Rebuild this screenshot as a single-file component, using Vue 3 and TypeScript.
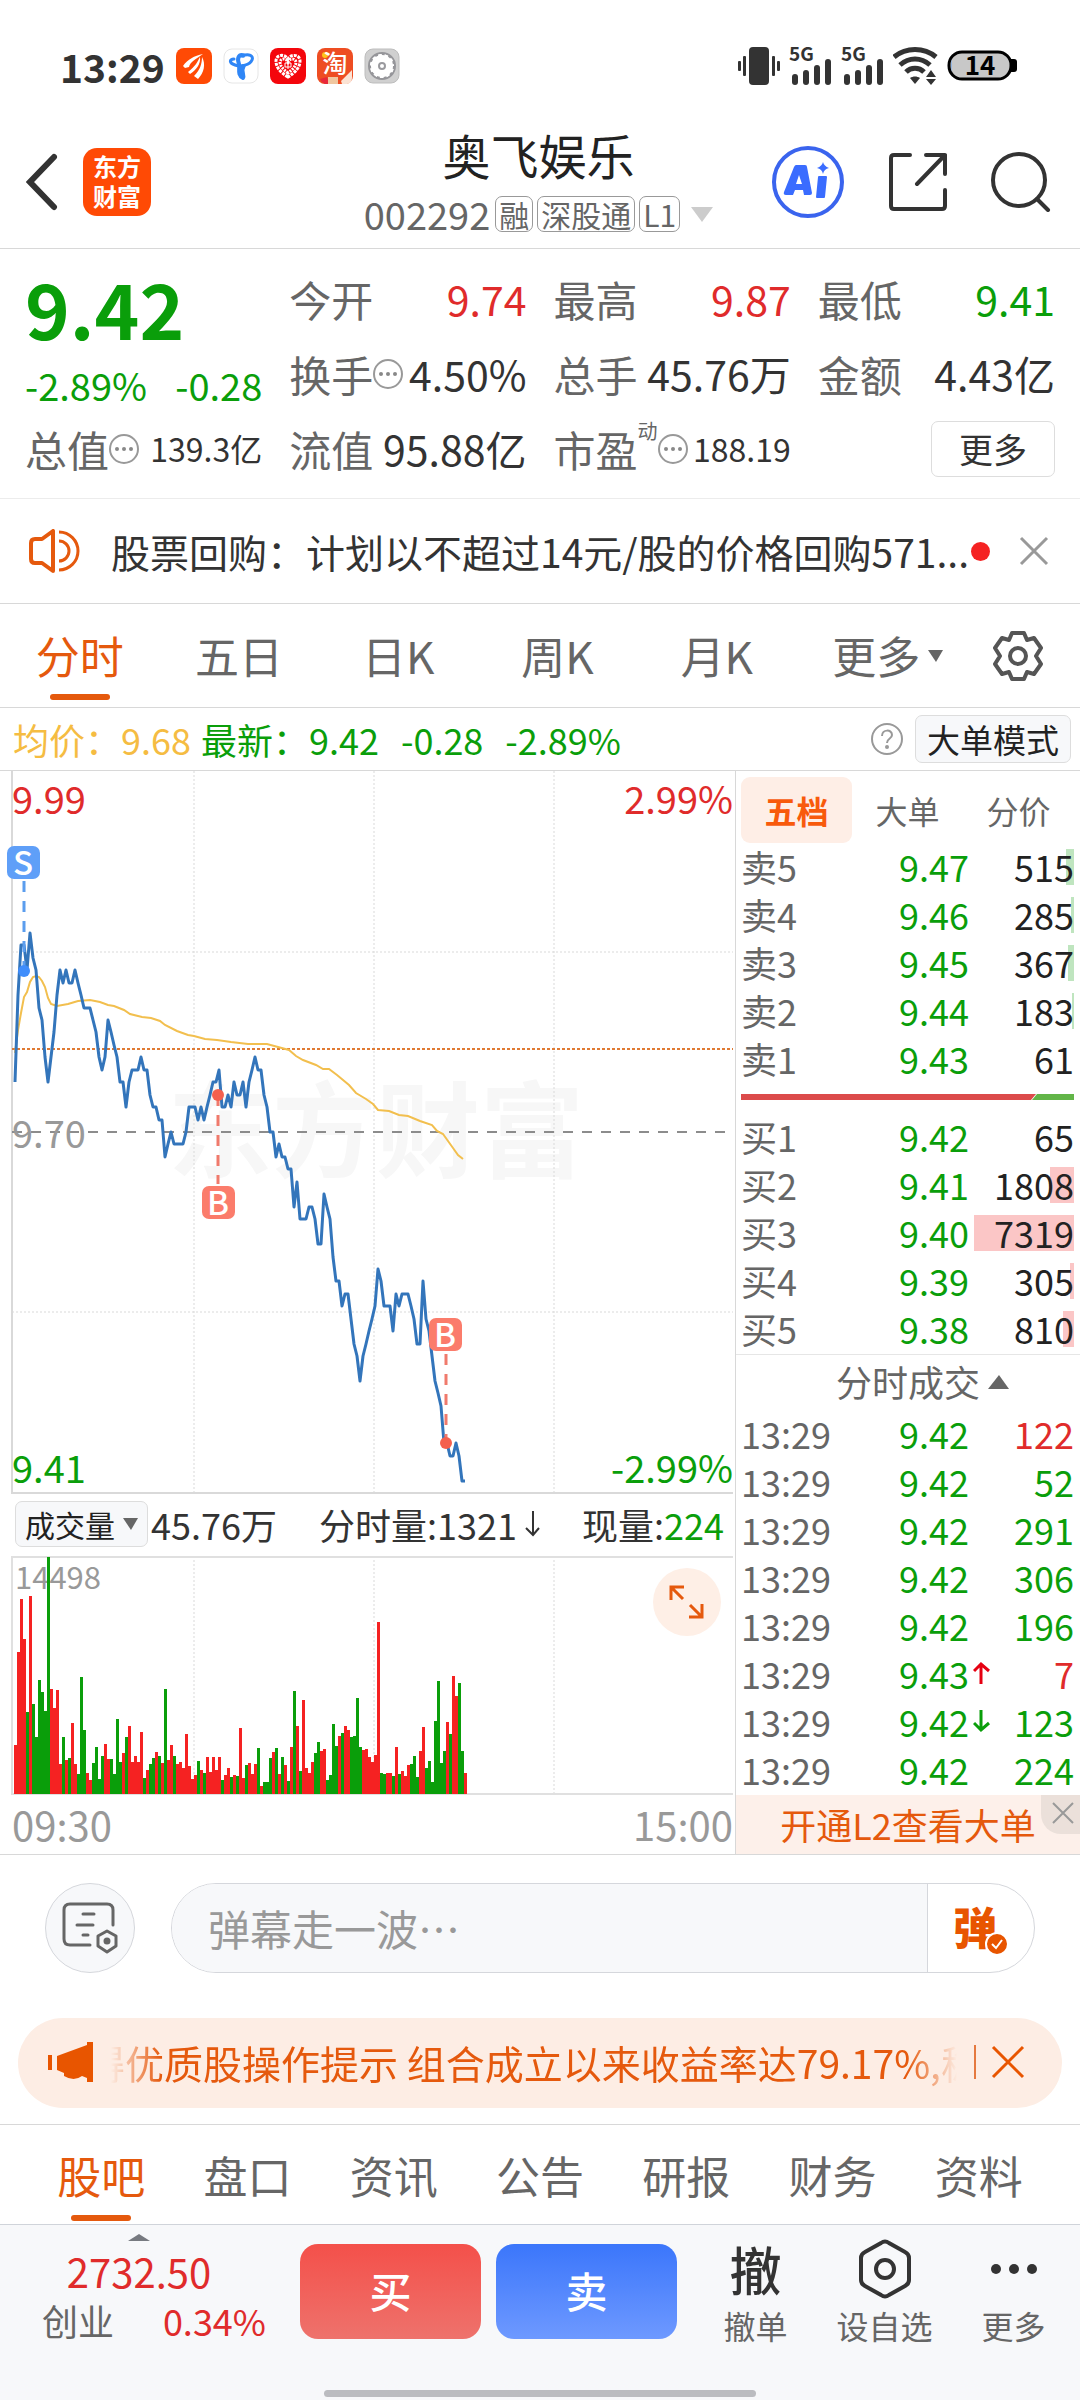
<script setup lang="ts">
import { ref } from 'vue'

type Tone = 'up' | 'down' | 'plain'

interface Level {
  label: string
  price: string
  volume: string
  bar: number
}

interface Trade {
  time: string
  price: string
  arrow: '' | 'up' | 'down'
  volume: string
  tone: Tone
}

const periods = ['分时', '五日', '日K', '周K', '月K', '更多']
const activePeriod = ref('分时')

const depthTabs = ['五档', '大单', '分价']
const activeDepth = ref('五档')

const sections = ['股吧', '盘口', '资讯', '公告', '研报', '财务', '资料']
const activeSection = ref('股吧')

const message = ref('')
const indicator = ref('成交量')

const asks: Level[] = [
  { label: '卖5', price: '9.47', volume: '515', bar: 7 },
  { label: '卖4', price: '9.46', volume: '285', bar: 3 },
  { label: '卖3', price: '9.45', volume: '367', bar: 5 },
  { label: '卖2', price: '9.44', volume: '183', bar: 2 },
  { label: '卖1', price: '9.43', volume: '61', bar: 0 },
]

const bids: Level[] = [
  { label: '买1', price: '9.42', volume: '65', bar: 0 },
  { label: '买2', price: '9.41', volume: '1808', bar: 22 },
  { label: '买3', price: '9.40', volume: '7319', bar: 100 },
  { label: '买4', price: '9.39', volume: '305', bar: 4 },
  { label: '买5', price: '9.38', volume: '810', bar: 10 },
]

const trades: Trade[] = [
  { time: '13:29', price: '9.42', arrow: '', volume: '122', tone: 'up' },
  { time: '13:29', price: '9.42', arrow: '', volume: '52', tone: 'down' },
  { time: '13:29', price: '9.42', arrow: '', volume: '291', tone: 'down' },
  { time: '13:29', price: '9.42', arrow: '', volume: '306', tone: 'down' },
  { time: '13:29', price: '9.42', arrow: '', volume: '196', tone: 'down' },
  { time: '13:29', price: '9.43', arrow: 'up', volume: '7', tone: 'up' },
  { time: '13:29', price: '9.42', arrow: 'down', volume: '123', tone: 'down' },
  { time: '13:29', price: '9.42', arrow: '', volume: '224', tone: 'down' },
]

// Minute closes, in cents above or below the previous close of 9.70.
const closes: number[] = [
  4, 11, 15, 15, 13, 16, 14, 13, 10, 9, 6, 4, 6, 8, 11, 13, 12, 13, 12, 12, 13, 12, 11, 10, 10, 10, 9, 8, 6, 5,
  6, 9, 8, 7, 6, 4, 4, 2, 4, 5, 5, 5, 6, 5, 5, 3, 2, 2, 1, 1, -2, -1, 0, -1, -1, -1, -1, 0, 2, 2,
  2, 1, 2, 1, 2, 3, 4, 4, 5, 2, 2, 3, 2, 4, 3, 3, 4, 2, 4, 5, 6, 5, 5, 3, 2, 0, 0, -2, -1, -2,
  -2, -3, -3, -6, -4, -7, -7, -7, -6, -6, -7, -9, -9, -5, -6, -7, -10, -12, -12, -14, -13, -13, -15, -17, -18, -20, -18, -17, -16, -15,
  -14, -11, -12, -14, -14, -14, -16, -13, -14, -13, -13, -13, -14, -15, -17, -17, -12, -15, -16, -18, -20, -21, -22, -25, -25, -26, -26, -25, -26, -28,
  -28,
]

const plotLeft = 12
const minute = 3
const baseY = 361
const cent = 12.45

const priceLine = closes
  .map((c, i) => `${plotLeft + minute * (i + 1)},${Math.round(baseY - c * cent)}`)
  .join(' ')

const averageLine = [
  [15, 282], [18, 259], [21, 242], [24, 226], [27, 221], [30, 211], [33, 206], [36, 205], [39, 206], [42, 210],
  [45, 216], [48, 227], [51, 233], [57, 235], [68, 233], [78, 230], [90, 229], [100, 231], [108, 234], [114, 235],
  [124, 239], [130, 243], [142, 246], [151, 247], [160, 250], [165, 254], [177, 260], [188, 264], [194, 265],
  [205, 268], [217, 269], [231, 271], [248, 273], [267, 273], [278, 276], [289, 279], [296, 285], [303, 289],
  [316, 294], [323, 298], [329, 298], [337, 304], [349, 314], [356, 322], [366, 328], [373, 333], [378, 339],
  [389, 340], [399, 344], [408, 345], [420, 350], [432, 354], [437, 360], [443, 363], [448, 370], [453, 377],
  [458, 384], [463, 388],
]
  .map(([x, y]) => `${x},${y}`)
  .join(' ')

// One entry per minute: colour letter (r rising, g falling) and bar height.
const volumes = (
  'r49 r142 r195 r155 g82 r198 g90 g57 g114 g102 g83 g237 r105 r86 r104 r30 g57 r34 g36 r71 r30 g20 g117 g64 r21 ' +
  'r14 g31 g47 g15 g38 r50 r35 g35 g20 g75 g32 r41 g57 r68 r32 r38 r32 r62 g16 r24 g30 g36 r42 g38 r31 g105 r34 ' +
  'r49 g38 r30 r32 r26 r60 r28 r15 r19 g33 r24 g21 r37 r22 r37 r24 r37 g14 r19 r26 g17 r19 g18 r66 r16 g29 r31 ' +
  'r20 r30 g46 r8 g12 g12 g36 r42 g46 r20 g37 r29 g13 r47 g103 r68 g23 r94 r26 r21 r32 g41 g52 r43 r45 g14 g19 ' +
  'g70 g48 r58 g61 r68 r64 g57 g58 g96 g47 r44 r45 r37 r32 r39 r172 g21 g20 r21 r21 g18 r47 g20 r23 r18 r29 g30 ' +
  'g38 g17 r43 r67 g26 g33 g12 g73 g113 g31 g43 r72 g60 r118 r98 g111 g43 r21'
)
  .split(' ')
  .map((item, i) => ({
    x: plotLeft + minute * (i + 1) - 1,
    height: Number(item.slice(1)),
    fill: item[0] === 'r' ? '#f52222' : '#0a9e0a',
  }))
</script>

<template>
  <div class="page">
    <div class="status">
      <div class="status-left">
        <span class="clock">13:29</span>
        <svg class="app" viewBox="0 0 36 36">
          <rect width="36" height="36" rx="8" fill="#ff4a05" />
          <path d="M7 18 C12 11 18 8 27 6 C20 11 14 14 13 19 L9 20 Z" fill="#fff" />
          <path d="M12 24 C19 19 22 13 24 9 C25 16 20 22 14 26 Z" fill="#fff" />
          <path d="M18 28 C24 22 26 16 26 9 C30 16 28 25 22 31 Z" fill="#fff" />
        </svg>
        <svg class="app" viewBox="0 0 36 36">
          <rect x="1" y="1" width="34" height="34" rx="8" fill="#fff" stroke="#e6e6e6" />
          <path d="M19 8 C26 5 31 8 29 12 C27 17 18 19 12 17 C6 15 6 11 11 11" fill="none" stroke="#2f86f6" stroke-width="3" stroke-linecap="round" />
          <path d="M22 8 C15 5 14 11 16 16 C17 21 14 27 20 30 C22 27 17 24 21 17" fill="none" stroke="#2f86f6" stroke-width="4" stroke-linejoin="round" />
        </svg>
        <svg class="app" viewBox="0 0 36 36">
          <rect width="36" height="36" rx="8" fill="#f4060c" />
          <path d="M18 29 C10 24 6 19 6 13 C6 7 14 5 18 11 C22 5 30 7 30 13 C30 19 26 24 18 29 Z" fill="none" stroke="#fff" stroke-width="3" stroke-dasharray="3 1" />
          <path d="M18 25 C13 21 10 18 10 14 C11 10 16 10 18 14 C20 10 25 10 26 14 C26 18 23 21 18 25 Z" fill="none" stroke="#fff" stroke-width="3" stroke-dasharray="2 1" />
          <path d="M15 15 h6 v4 h-6 z M18 13 v8" fill="none" stroke="#fff" stroke-width="1" />
        </svg>
        <svg class="app" viewBox="0 0 36 36">
          <rect width="36" height="36" rx="8" fill="#ee4d22" />
          <circle cx="8" cy="7" r="3" fill="#ffc21a" />
          <path d="M3 31 L10 29 L12 36 H8 A8 8 0 0 1 3 31 Z" fill="#e8283a" />
          <path d="M11 29 h10 v7 h-10 z" fill="#f0c7a0" />
          <path d="M24 33 L35 22 V30 A6 6 0 0 1 30 36 H25 Z" fill="#fbe3d4" />
          <text x="18" y="25" text-anchor="middle" font-size="25" font-weight="500" fill="#fff">淘</text>
        </svg>
        <svg class="app" viewBox="0 0 36 36">
          <rect x="1" y="1" width="34" height="34" rx="8" fill="#d0d0d0" stroke="#bdbdbd" />
          <circle cx="18" cy="18" r="13" fill="#fff" stroke="#96969a" stroke-width="2" />
          <circle cx="18" cy="18" r="12" fill="#fff" stroke="#96969a" stroke-width="2" stroke-dasharray="3 4" />
          <circle cx="18" cy="18" r="3" fill="none" stroke="#9a9a9e" stroke-width="2" />
        </svg>
      </div>
      <div class="status-right">
        <svg width="42" height="38" viewBox="0 0 42 38" fill="#333">
          <rect x="11" y="0" width="20" height="38" rx="4" />
          <rect x="5" y="9" width="3" height="20" rx="1" />
          <rect x="0" y="14" width="3" height="10" rx="1" />
          <rect x="34" y="9" width="3" height="20" rx="1" />
          <rect x="39" y="14" width="3" height="10" rx="1" />
        </svg>
        <svg v-for="n in 2" :key="n" class="signal" width="43" height="38" viewBox="0 0 43 38" fill="#333">
          <text x="0" y="14" font-size="19" font-weight="700">5G</text>
          <rect x="3" y="27" width="6" height="11" rx="3" />
          <rect x="14" y="23" width="6" height="15" rx="3" />
          <rect x="25" y="18" width="6" height="20" rx="3" />
          <rect x="36" y="12" width="6" height="26" rx="3" />
        </svg>
        <svg width="45" height="38" viewBox="0 0 45 38" fill="none" stroke="#333" stroke-width="5">
          <path d="M1 10 C13 0 31 0 43 10" />
          <path d="M7 18 C16 10 28 10 37 18" />
          <path d="M13 25 C18 20 26 20 31 25" />
          <path d="M17 31 C20 29 24 29 27 31 L22 37 Z" fill="#333" stroke="none" />
          <path d="M38 23 L43 30 H33 Z M38 38 L43 32 H33 Z" fill="#333" stroke="none" />
        </svg>
        <svg class="signal" width="71" height="32" viewBox="0 0 71 32">
          <path d="M64 9 h3 a3 3 0 0 1 3 3 v7 a3 3 0 0 1 -3 3 h-3 z" fill="#000" />
          <rect x="2" y="2" width="62" height="27" rx="13" fill="#c8c8c8" stroke="#000" stroke-width="3" />
          <path d="M5 9 Q3 15 5 22 Z" fill="#8fb6e8" />
          <text x="33" y="25" text-anchor="middle" font-size="26" font-weight="700" fill="#000">14</text>
        </svg>
      </div>
    </div>

    <header class="header">
      <div class="header-left">
        <button class="icon-button" aria-label="返回">
          <svg width="32" height="58" viewBox="0 0 32 58"><path d="M28 4 L4 29 L28 54" fill="none" stroke="#333" stroke-width="6" stroke-linecap="round" /></svg>
        </button>
        <span class="brand"><span>东方</span><span>财富</span></span>
      </div>
      <div class="title">
        <h1>奥飞娱乐</h1>
        <p>
          <span class="code">002292</span>
          <span class="tag">融</span><span class="tag">深股通</span><span class="tag">L1</span>
          <svg class="caret" width="22" height="15" viewBox="0 0 22 15"><path d="M0 0 H22 L11 15 Z" fill="#ccc" /></svg>
        </p>
      </div>
      <div class="header-right">
        <button class="icon-button" aria-label="智能助手">
          <svg width="74" height="74" viewBox="0 0 74 74">
            <circle cx="37" cy="37" r="34" fill="none" stroke="#3a64ee" stroke-width="4" />
            <path d="M25 20 H34 Q36 20 36 22 L41 48 Q41 50 39 50 H33 L32 45 H24 L22 50 H15 Q12 50 13 47 L23 22 Q24 20 25 20 Z M28 30 L25 39 H31 Z" fill="#3a6cff" fill-rule="evenodd" />
            <path d="M48 32 H55 L53 52 H46 Z" fill="#3a6cff" stroke="#3a6cff" stroke-width="2" stroke-linejoin="round" />
            <path d="M52 17 Q53 21 58 23 Q53 24 52 29 Q51 24 46 23 Q51 21 52 17 Z" fill="#3a6cff" />
          </svg>
        </button>
        <button class="icon-button" aria-label="分享">
          <svg width="58" height="60" viewBox="0 0 58 60" fill="none" stroke="#333" stroke-width="4" stroke-linecap="round" stroke-linejoin="round">
            <path d="M21 3 H5 Q2 3 2 6 V54 Q2 57 5 57 H53 Q56 57 56 54 V38" />
            <path d="M37 3 H56 V22 M56 3 L28 32" />
          </svg>
        </button>
        <button class="icon-button" aria-label="搜索">
          <svg width="60" height="60" viewBox="0 0 60 60" fill="none" stroke="#333" stroke-width="4" stroke-linecap="round">
            <circle cx="28" cy="28" r="26" />
            <path d="M46 47 L57 58" />
          </svg>
        </button>
      </div>
    </header>

    <section class="stats">
      <div class="col">
        <strong class="last">9.42</strong>
        <div class="pair change"><span>-2.89%</span><span>-0.28</span></div>
        <div class="pair">
          <span class="name">总值<svg class="dots"><use href="#more-dots" /></svg></span><span class="small">139.3亿</span>
        </div>
      </div>
      <div class="col">
        <div class="pair"><span class="name">今开</span><span class="up">9.74</span></div>
        <div class="pair"><span class="name">换手<svg class="dots"><use href="#more-dots" /></svg></span><span>4.50%</span></div>
        <div class="pair"><span class="name">流值</span><span>95.88亿</span></div>
      </div>
      <div class="col">
        <div class="pair"><span class="name">最高</span><span class="up">9.87</span></div>
        <div class="pair"><span class="name">总手</span><span>45.76万</span></div>
        <div class="pair">
          <span class="name">市盈<sup>动</sup><svg class="dots"><use href="#more-dots" /></svg></span><span class="small">188.19</span>
        </div>
      </div>
      <div class="col">
        <div class="pair"><span class="name">最低</span><span class="down">9.41</span></div>
        <div class="pair"><span class="name">金额</span><span>4.43亿</span></div>
        <div class="pair end"><button class="outline">更多</button></div>
      </div>
      <svg class="defs">
        <symbol id="more-dots" viewBox="0 0 30 30">
          <circle cx="15" cy="15" r="14" fill="none" stroke="#999" stroke-width="2" />
          <circle cx="8" cy="15" r="2" fill="#888" />
          <circle cx="15" cy="15" r="2" fill="#888" />
          <circle cx="22" cy="15" r="2" fill="#888" />
        </symbol>
      </svg>
    </section>

    <section class="notice">
      <svg width="52" height="44" viewBox="0 0 52 44" fill="none" stroke="#e5590d" stroke-width="4" stroke-linejoin="round">
        <path d="M24 2 V42 L13 34 H6 Q2 34 2 30 V14 Q2 10 6 10 H13 Z" />
        <path d="M30 12 A10 10 0 0 1 30 32" stroke-width="3" />
        <path d="M30 3 A19 19 0 0 1 30 41" stroke-width="3" />
      </svg>
      <a href="#notice" class="notice-text">股票回购：计划以不超过14元/股的价格回购571...</a>
      <span class="red-dot"></span>
      <button class="icon-button" aria-label="关闭公告">
        <svg width="30" height="30" viewBox="0 0 30 30"><path d="M2 2 L28 28 M28 2 L2 28" stroke="#999" stroke-width="3" /></svg>
      </button>
    </section>

    <nav class="periods">
      <button v-for="p in periods" :key="p" :class="{ active: p === activePeriod }" @click="activePeriod = p">
        {{ p }}<svg v-if="p === '更多'" width="15" height="12" viewBox="0 0 15 12"><path d="M0 0 H15 L8 12 Z" fill="#666" /></svg>
      </button>
      <button aria-label="设置">
        <svg width="52" height="52" viewBox="0 0 52 52" fill="none" stroke="#555" stroke-width="4" stroke-linejoin="round">
          <path d="M20 3 H32 L35 10 L42 8 L49 18 L44 26 L49 34 L42 44 L35 42 L32 49 H20 L17 42 L10 44 L3 34 L8 26 L3 18 L10 8 L17 10 Z" />
          <circle cx="26" cy="26" r="8" />
        </svg>
      </button>
    </nav>

    <div class="quote">
      <span class="avg">均价：9.68</span>
      <span class="latest"><span>最新：9.42</span><span>-0.28</span><span>-2.89%</span></span>
      <button class="icon-button help" aria-label="说明">
        <svg width="34" height="34" viewBox="0 0 34 34">
          <circle cx="17" cy="17" r="15" fill="none" stroke="#999" stroke-width="2" />
          <path d="M12 14 C12 7 22 7 22 13 C22 17 17 16 17 21" fill="none" stroke="#999" stroke-width="2" />
          <circle cx="17" cy="25" r="2" fill="#999" />
        </svg>
      </button>
      <button class="mode">大单模式</button>
    </div>

    <main class="board">
      <div class="charts">
        <svg class="plot" viewBox="0 0 735 723">
          <text x="376" y="353" text-anchor="middle" dominant-baseline="central" font-size="104" font-weight="700" fill="#f7f7f7">东方财富</text>
          <g fill="none" stroke="#d9d9d9" stroke-dasharray="2 2">
            <path d="M194 0 V721 M374 0 V721 M554 0 V721 M12 181 H733 M12 541 H733" />
          </g>
          <path d="M12 0 V722 H733" fill="none" stroke="#d9d9d9" stroke-width="2" />
          <path d="M12 278 H733" stroke="#e07a33" stroke-width="2" stroke-dasharray="3 2" />
          <path d="M12 361 H733" stroke="#8c8c8c" stroke-width="2" stroke-dasharray="10 9" />
          <polyline :points="averageLine" fill="none" stroke="#f2bf4e" stroke-width="2" />
          <polyline :points="priceLine" fill="none" stroke="#3375bb" stroke-width="3" stroke-linejoin="round" />
          <g font-size="38">
            <text x="12" y="43" fill="#e02b2b">9.99</text>
            <text x="733" y="43" text-anchor="end" fill="#e02b2b">2.99%</text>
            <text x="12" y="377" fill="#999">9.70</text>
            <text x="12" y="712" fill="#0a9e0a">9.41</text>
            <text x="733" y="712" text-anchor="end" fill="#0a9e0a">-2.99%</text>
          </g>
          <g stroke-width="3" stroke-dasharray="11 9" fill="none">
            <path d="M24 110 V200" stroke="#5b9dee" />
            <path d="M218 324 V413" stroke="#f07a6c" />
            <path d="M446 583 V672" stroke="#f07a6c" />
          </g>
          <circle cx="24" cy="200" r="6" fill="#3f8dfb" />
          <circle cx="218" cy="324" r="6" fill="#f4604e" />
          <circle cx="446" cy="672" r="6" fill="#f4604e" />
          <rect x="7" y="75" width="33" height="33" rx="7" fill="#5f9ff8" />
          <rect x="202" y="415" width="33" height="33" rx="7" fill="#fb7c6b" />
          <rect x="429" y="547" width="33" height="33" rx="7" fill="#fb7c6b" />
          <g font-size="33" font-weight="500" fill="#fff" text-anchor="middle">
            <text x="23" y="104">S</text>
            <text x="218" y="444">B</text>
            <text x="445" y="576">B</text>
          </g>
        </svg>

        <div class="volume-head">
          <label class="picker">
            <select v-model="indicator" aria-label="指标"><option>成交量</option></select>
            <svg width="15" height="12" viewBox="0 0 15 12"><path d="M0 0 H15 L8 12 Z" fill="#666" /></svg>
          </label>
          <span class="total">45.76万</span>
          <span class="minute">分时量:1321<svg width="15" height="26" viewBox="0 0 15 26"><path d="M8 0 V24 M1 17 L8 24 L14 17" fill="none" stroke="#333" stroke-width="2" /></svg></span>
          <span>现量:<b class="down">224</b></span>
        </div>

        <svg class="plot" viewBox="0 0 735 239">
          <path d="M194 0 V238 M374 0 V238 M554 0 V238" fill="none" stroke="#d9d9d9" stroke-dasharray="2 2" />
          <path d="M733 1 H12 V238 H733" fill="none" stroke="#e0e0e0" stroke-width="2" />
          <text x="15" y="33" font-size="31" fill="#999">14498</text>
          <rect v-for="bar in volumes" :key="bar.x" :x="bar.x" :y="238 - bar.height" width="3" :height="bar.height" :fill="bar.fill" />
          <circle cx="687" cy="46" r="34" fill="#feefe6" />
          <path d="M671 44 V31 H684 M671 31 L683 43 M702 48 V61 H689 M702 61 L690 49" fill="none" stroke="#e5590d" stroke-width="3" />
        </svg>
        <div class="times"><span>09:30</span><span>15:00</span></div>
      </div>

      <aside class="depth">
        <div class="depth-tabs">
          <button v-for="t in depthTabs" :key="t" :class="{ active: t === activeDepth }" @click="activeDepth = t">{{ t }}</button>
        </div>
        <table class="book">
          <tbody>
            <tr v-for="row in asks" :key="row.label">
              <th scope="row">{{ row.label }}</th>
              <td class="down">{{ row.price }}</td>
              <td class="size"><i class="fill ask" :style="{ width: row.bar + '%' }"></i><span>{{ row.volume }}</span></td>
            </tr>
          </tbody>
        </table>
        <div class="ratio"><svg viewBox="0 0 333 6" preserveAspectRatio="none"><path d="M0 0 H295 L290 6 H0 Z" fill="#dc4b4b" /><path d="M296 0 H333 V6 H291 Z" fill="#62b548" /></svg></div>
        <table class="book">
          <tbody>
            <tr v-for="row in bids" :key="row.label">
              <th scope="row">{{ row.label }}</th>
              <td class="down">{{ row.price }}</td>
              <td class="size"><i class="fill bid" :style="{ width: row.bar + '%' }"></i><span>{{ row.volume }}</span></td>
            </tr>
          </tbody>
        </table>
        <button class="trades-title">分时成交<svg width="21" height="14" viewBox="0 0 21 14"><path d="M0 14 H21 L11 0 Z" fill="#666" /></svg></button>
        <table class="book">
          <tbody>
            <tr v-for="(t, i) in trades" :key="i">
              <th scope="row">{{ t.time }}</th>
              <td class="down">
                {{ t.price }}<svg v-if="t.arrow" class="arrow" width="17" height="24" viewBox="0 0 17 24" fill="none" stroke-width="3">
                  <path v-if="t.arrow === 'up'" d="M8 23 V3 M1 10 L8 3 L16 10" stroke="#e60012" />
                  <path v-else d="M8 1 V21 M1 14 L8 21 L16 14" stroke="#0a9e0a" />
                </svg>
              </td>
              <td class="size" :class="t.tone">{{ t.volume }}</td>
            </tr>
          </tbody>
        </table>
        <div class="upsell">
          <a href="#l2">开通L2查看大单</a>
          <button aria-label="关闭"><svg width="22" height="22" viewBox="0 0 22 22"><path d="M1 1 L21 21 M21 1 L1 21" stroke="#999" stroke-width="2" /></svg></button>
        </div>
      </aside>
    </main>

    <section class="chat">
      <button class="round" aria-label="弹幕设置">
        <svg width="56" height="52" viewBox="0 0 56 52" fill="none" stroke="#666" stroke-width="3" stroke-linecap="round">
          <path d="M28 43 H8 Q2 43 2 37 V8 Q2 2 8 2 H45 Q51 2 51 8 V23" />
          <path d="M21 12 H32 M15 23 H31 M21 33 H26" />
          <path d="M45 29 L54 34 V44 L45 50 L36 44 V34 Z" stroke-linejoin="round" />
          <circle cx="45" cy="39" r="2" fill="#666" />
        </svg>
      </button>
      <div class="chat-box">
        <input v-model="message" type="text" placeholder="弹幕走一波⋯" aria-label="弹幕" />
        <button class="toggle" aria-label="弹幕开关">
          <span>弹</span>
          <svg width="24" height="24" viewBox="0 0 24 24"><circle cx="12" cy="12" r="11" fill="#e85500" stroke="#fff" stroke-width="2" /><path d="M7 12 L11 16 L17 8" fill="none" stroke="#fff" stroke-width="2" /></svg>
        </button>
      </div>
    </section>

    <section class="promo">
      <svg width="46" height="40" viewBox="0 0 46 40" fill="#e85500">
        <rect x="0" y="13" width="4" height="15" />
        <path d="M9 14 L39 3 V0 H45 V40 H39 V36 L34 34 Q26 40 16 34 V31 L9 28 Z" />
      </svg>
      <p class="promo-text">得优质股操作提示 组合成立以来收益率达79.17%,稳健</p>
      <span class="bar"></span>
      <button class="icon-button" aria-label="关闭推广">
        <svg width="34" height="34" viewBox="0 0 34 34"><path d="M2 2 L32 32 M32 2 L2 32" stroke="#e85500" stroke-width="3" /></svg>
      </button>
    </section>

    <nav class="sections">
      <button v-for="s in sections" :key="s" :class="{ active: s === activeSection }" @click="activeSection = s">{{ s }}</button>
    </nav>

    <footer class="dock">
      <div class="dock-row">
        <a href="#index" class="index">
          <svg width="22" height="7" viewBox="0 0 22 7"><path d="M0 7 H22 L11 0 Z" fill="#777a80" /></svg>
          <span class="index-value">2732.50</span>
          <span class="index-line"><span class="grey">创业</span><span>0.34%</span></span>
        </a>
        <button class="trade buy">买</button>
        <button class="trade sell">卖</button>
        <button class="tool"><span class="glyph">撤</span><span>撤单</span></button>
        <button class="tool">
          <span class="glyph">
            <svg width="54" height="60" viewBox="0 0 54 60" fill="none" stroke="#333" stroke-width="4">
              <path d="M23 4 Q27 1 31 4 L47 13 Q51 15 51 19 V41 Q51 45 47 47 L31 56 Q27 59 23 56 L7 47 Q3 45 3 41 V19 Q3 15 7 13 Z" />
              <circle cx="27" cy="30" r="9" />
            </svg>
          </span>
          <span>设自选</span>
        </button>
        <button class="tool">
          <span class="glyph">
            <svg width="48" height="12" viewBox="0 0 48 12" fill="#333"><circle cx="6" cy="6" r="5" /><circle cx="24" cy="6" r="5" /><circle cx="42" cy="6" r="5" /></svg>
          </span>
          <span>更多</span>
        </button>
      </div>
      <div class="handle"></div>
    </footer>
  </div>
</template>

<style>
body {
  background: #fff;
}
</style>

<style scoped>
.page {
  font-family: 'Noto Sans CJK SC', 'Noto Sans', sans-serif;
  color: #333;
  background: #fff;
  font-size: 36px;
  line-height: 48px;
}
.page * {
  box-sizing: border-box;
}
svg {
  display: block;
  flex: none;
}
button,
select,
input {
  font: inherit;
  color: inherit;
  background: none;
  border: 0;
  padding: 0;
  margin: 0;
}
a {
  color: inherit;
  text-decoration: none;
}
h1,
p {
  margin: 0;
}
.up {
  color: #e02b2b;
}
.down {
  color: #0a9e0a;
}
.icon-button {
  display: flex;
}

.status {
  display: flex;
  justify-content: space-between;
  align-items: center;
  padding: 42px 62px 34px 60px;
}
.status-left,
.status-right {
  display: flex;
  align-items: center;
  gap: 11px;
}
.status-right {
  gap: 9px;
}
.clock {
  font-size: 39px;
  font-weight: 700;
}
.app,
.signal {
  overflow: visible;
}
.app {
  width: 36px;
  height: 36px;
}

.header {
  display: grid;
  grid-template-columns: 1fr auto 1fr;
  align-items: center;
  padding: 0 29px 8px 26px;
  border-bottom: 1px solid #d8d8d8;
}
.header-left,
.header-right {
  display: flex;
  align-items: center;
}
.header-left {
  gap: 25px;
}
.header-right {
  justify-content: flex-end;
  gap: 44px;
}
.brand {
  display: flex;
  flex-direction: column;
  align-items: center;
  justify-content: center;
  width: 68px;
  height: 68px;
  padding-bottom: 2px;
  border-radius: 14px;
  background: #ff4a05;
  color: #fff;
  font-size: 24px;
  font-weight: 700;
  line-height: 30px;
}
.title {
  text-align: center;
}
.title h1 {
  margin-bottom: 4px;
  font-size: 48px;
  font-weight: 400;
  line-height: 60px;
  color: #222;
}
.title p {
  display: flex;
  align-items: center;
  justify-content: center;
  gap: 4px;
  font-size: 38px;
  line-height: 52px;
  color: #666;
}
.code {
  margin-right: 1px;
}
.tag {
  border: 1px solid #999;
  border-radius: 7px;
  padding: 0 3px;
  font-size: 30px;
  line-height: 34px;
}
.caret {
  margin-left: 7px;
}

.stats {
  display: grid;
  grid-template-columns: repeat(4, 1fr);
  gap: 27px;
  padding: 12px 25px;
  border-bottom: 1px solid #ececec;
}
.col {
  display: flex;
  flex-direction: column;
  min-width: 0;
}
.pair {
  display: flex;
  justify-content: space-between;
  align-items: center;
  font-size: 41px;
  line-height: 75px;
  height: 75px;
  white-space: nowrap;
}
.last {
  font-size: 76px;
  font-weight: 700;
  line-height: 92px;
  color: #0a9e0a;
}
.change {
  padding-top: 6px;
  font-size: 38px;
  line-height: 52px;
  height: 58px;
  color: #0a9e0a;
}
.name {
  display: flex;
  align-items: center;
  font-size: 42px;
  color: #666;
}
.name sup {
  align-self: flex-start;
  font-size: 20px;
  line-height: 40px;
}
.small {
  font-size: 32px;
}
.dots {
  width: 30px;
  height: 30px;
}
.defs {
  display: none;
}
.end {
  justify-content: flex-end;
}
.outline {
  width: 124px;
  border: 1px solid #ddd;
  border-radius: 7px;
  font-size: 34px;
  line-height: 54px;
}

.notice {
  display: flex;
  align-items: center;
  padding: 0 31px 0 29px;
  border-bottom: 1px solid #d8d8d8;
  font-size: 39px;
  line-height: 104px;
}
.notice-text {
  flex: 1;
  min-width: 0;
  margin-left: 30px;
  white-space: nowrap;
}
.red-dot {
  width: 19px;
  height: 19px;
  border-radius: 50%;
  background: #f52222;
  margin: 0 29px 0 11px;
}

.periods {
  display: grid;
  grid-template-columns: repeat(5, 159fr) 182fr 78fr;
  padding-right: 23px;
  border-bottom: 1px solid #d8d8d8;
}
.periods button {
  display: flex;
  align-items: center;
  justify-content: center;
  gap: 8px;
  position: relative;
  font-size: 44px;
  line-height: 103px;
  color: #666;
}
.periods .active,
.sections .active {
  color: #e5590d;
}
.periods .active::after,
.sections .active::after {
  content: '';
  position: absolute;
  bottom: 7px;
  left: 50%;
  width: 60px;
  height: 6px;
  margin-left: -30px;
  border-radius: 3px;
  background: #e5590d;
}

.quote {
  display: flex;
  align-items: center;
  padding: 7px 9px 7px 13px;
  border-bottom: 1px solid #d8d8d8;
}
.avg {
  color: #f5bc42;
}
.latest {
  display: flex;
  gap: 22px;
  margin-left: 10px;
  color: #0a9e0a;
}
.help {
  margin-left: auto;
}
.mode {
  margin-left: 11px;
  padding: 0 11px;
  border: 1px solid #ddd;
  border-radius: 7px;
  background: #f7f8fa;
  color: #222;
  font-size: 33px;
  line-height: 46px;
}

.board {
  display: grid;
  grid-template-columns: 735fr 345fr;
  border-bottom: 1px solid #d8d8d8;
}
.charts {
  min-width: 0;
}
.plot {
  width: 100%;
  height: auto;
}
.volume-head {
  display: flex;
  align-items: center;
  padding: 7px 11px 9px 15px;
  line-height: 46px;
  white-space: nowrap;
}
.volume-head b {
  font-weight: 400;
}
.picker {
  display: flex;
  align-items: center;
  gap: 8px;
  padding: 0 9px;
  border: 1px solid #ddd;
  border-radius: 7px;
  background: #f7f8fa;
  color: #222;
}
.picker select {
  appearance: none;
  font-size: 30px;
  line-height: 44px;
}
.total {
  margin-left: 3px;
}
.minute {
  display: flex;
  align-items: center;
  gap: 8px;
  margin: 0 auto;
}
.times {
  display: flex;
  justify-content: space-between;
  padding: 0 2px 0 12px;
  font-size: 40px;
  line-height: 59px;
  color: #999;
}

.depth {
  display: flex;
  flex-direction: column;
  border-left: 1px solid #d8d8d8;
}
.depth-tabs {
  display: grid;
  grid-template-columns: repeat(3, 1fr);
  padding: 6px 6px 1px 5px;
}
.depth-tabs button {
  border-radius: 9px;
  font-size: 32px;
  line-height: 66px;
  color: #666;
}
.depth-tabs .active {
  background: #feeee6;
  color: #f85a0c;
  font-weight: 700;
}
.book {
  width: 100%;
  border-collapse: collapse;
  table-layout: fixed;
}
.book th,
.book td {
  height: 48px;
  padding: 0;
  line-height: 45px;
  font-weight: 400;
  vertical-align: top;
}
.book th {
  padding-left: 5px;
  text-align: left;
  color: #666;
}
.book td {
  position: relative;
  width: 106px;
  text-align: right;
}
.book .size {
  width: 111px;
  padding-right: 6px;
  color: #222;
}
.book .size.up {
  color: #e02b2b;
}
.book .size.down {
  color: #0a9e0a;
}
.size span {
  position: relative;
}
.fill {
  position: absolute;
  top: 5px;
  right: 6px;
  height: 36px;
  max-width: 100px;
}
.ask {
  background: #bfe5bf;
}
.bid {
  background: #fbc6c6;
}
.arrow {
  position: absolute;
  left: 100%;
  top: 10px;
  margin-left: 4px;
}
.ratio {
  padding: 10px 6px 14px 5px;
}
.ratio svg {
  width: 100%;
  height: 6px;
}
.trades-title {
  display: flex;
  align-items: center;
  justify-content: center;
  gap: 8px;
  padding: 0 0 3px 29px;
  border-top: 1px solid #e6e6e6;
  line-height: 53px;
  color: #666;
}
.upsell {
  display: flex;
  flex: 1;
  justify-content: center;
  position: relative;
  background: #fdf0ea;
  color: #e5590d;
  line-height: 58px;
}
.upsell button {
  display: flex;
  align-items: center;
  justify-content: center;
  position: absolute;
  top: 0;
  right: 0;
  width: 39px;
  height: 39px;
  padding: 0 0 4px 4px;
  border-bottom-left-radius: 20px;
  background: #ebe0da;
}

.chat {
  display: flex;
  gap: 36px;
  padding: 28px 45px 45px;
}
.round {
  display: flex;
  align-items: center;
  justify-content: center;
  width: 90px;
  height: 90px;
  border: 1px solid #d5d7dc;
  border-radius: 50%;
  background: #f7f8fa;
}
.chat-box {
  display: flex;
  flex: 1;
  border: 1px solid #d5d7dc;
  border-radius: 45px;
  overflow: hidden;
}
.chat-box input {
  flex: 1;
  min-width: 0;
  padding: 0 36px;
  background: #f7f8fa;
  font-size: 42px;
}
.chat-box input::placeholder {
  color: #999;
  opacity: 1;
}
.toggle {
  display: flex;
  align-items: center;
  justify-content: center;
  position: relative;
  width: 107px;
  padding: 0 12px 4px 0;
  border-left: 1px solid #d5d7dc;
  color: #e85500;
  font-size: 44px;
  font-weight: 900;
}
.toggle svg {
  position: absolute;
  right: 25px;
  bottom: 16px;
}

.promo {
  display: flex;
  align-items: center;
  margin: 0 18px 16px;
  padding: 0 37px 2px 30px;
  border-radius: 45px;
  background: #fdede4;
  color: #e5590d;
  font-size: 39px;
  line-height: 88px;
}
.promo-text {
  flex: 1;
  min-width: 0;
  margin: 0 17px;
  overflow: hidden;
  white-space: nowrap;
  text-indent: -25px;
  -webkit-mask-image: linear-gradient(90deg, transparent, #000 50px, #000 calc(100% - 50px), transparent);
  mask-image: linear-gradient(90deg, transparent, #000 50px, #000 calc(100% - 50px), transparent);
}
.bar {
  width: 2px;
  height: 34px;
  margin-right: 15px;
  background: #e5793f;
}

.sections {
  display: grid;
  grid-template-columns: repeat(7, 1fr);
  padding: 0 28px;
  border-top: 1px solid #d8d8d8;
  border-bottom: 1px solid #d0d4da;
}
.sections button {
  position: relative;
  font-size: 44px;
  line-height: 98px;
  padding-top: 1px;
  color: #666;
}
.sections .active {
  color: #e5590d;
}
.sections .active::after {
  bottom: 3px;
}

.dock {
  padding-bottom: 3px;
  background: #f7f8fa;
}
.dock-row {
  display: flex;
  align-items: flex-start;
  padding: 9px 2px 0 12px;
}
.index {
  display: flex;
  flex-direction: column;
  align-items: center;
  width: 254px;
  margin-right: 34px;
  color: #e02b2b;
}
.index-value {
  font-size: 40px;
  line-height: 60px;
}
.index-line {
  display: flex;
  justify-content: space-between;
  align-self: stretch;
  padding-left: 30px;
  line-height: 38px;
}
.grey {
  color: #666;
}
.trade {
  flex: 1;
  margin-top: 10px;
  padding-bottom: 4px;
  border-radius: 18px;
  color: #fff;
  font-size: 42px;
  font-weight: 500;
  line-height: 91px;
}
.buy {
  margin-right: 15px;
  background: linear-gradient(#f4504a, #ee726c);
}
.sell {
  margin-right: 14px;
  background: linear-gradient(#3b76fb, #6e99ff);
}
.tool {
  display: flex;
  flex-direction: column;
  align-items: center;
  width: 129px;
  font-size: 32px;
  line-height: 44px;
  color: #666;
}
.glyph {
  display: flex;
  align-items: center;
  height: 69px;
  color: #333;
  font-size: 52px;
  font-weight: 500;
}
.handle {
  width: 40%;
  height: 7px;
  margin: 43px auto 0;
  border-radius: 4px;
  background: #bbbcc0;
}
</style>
